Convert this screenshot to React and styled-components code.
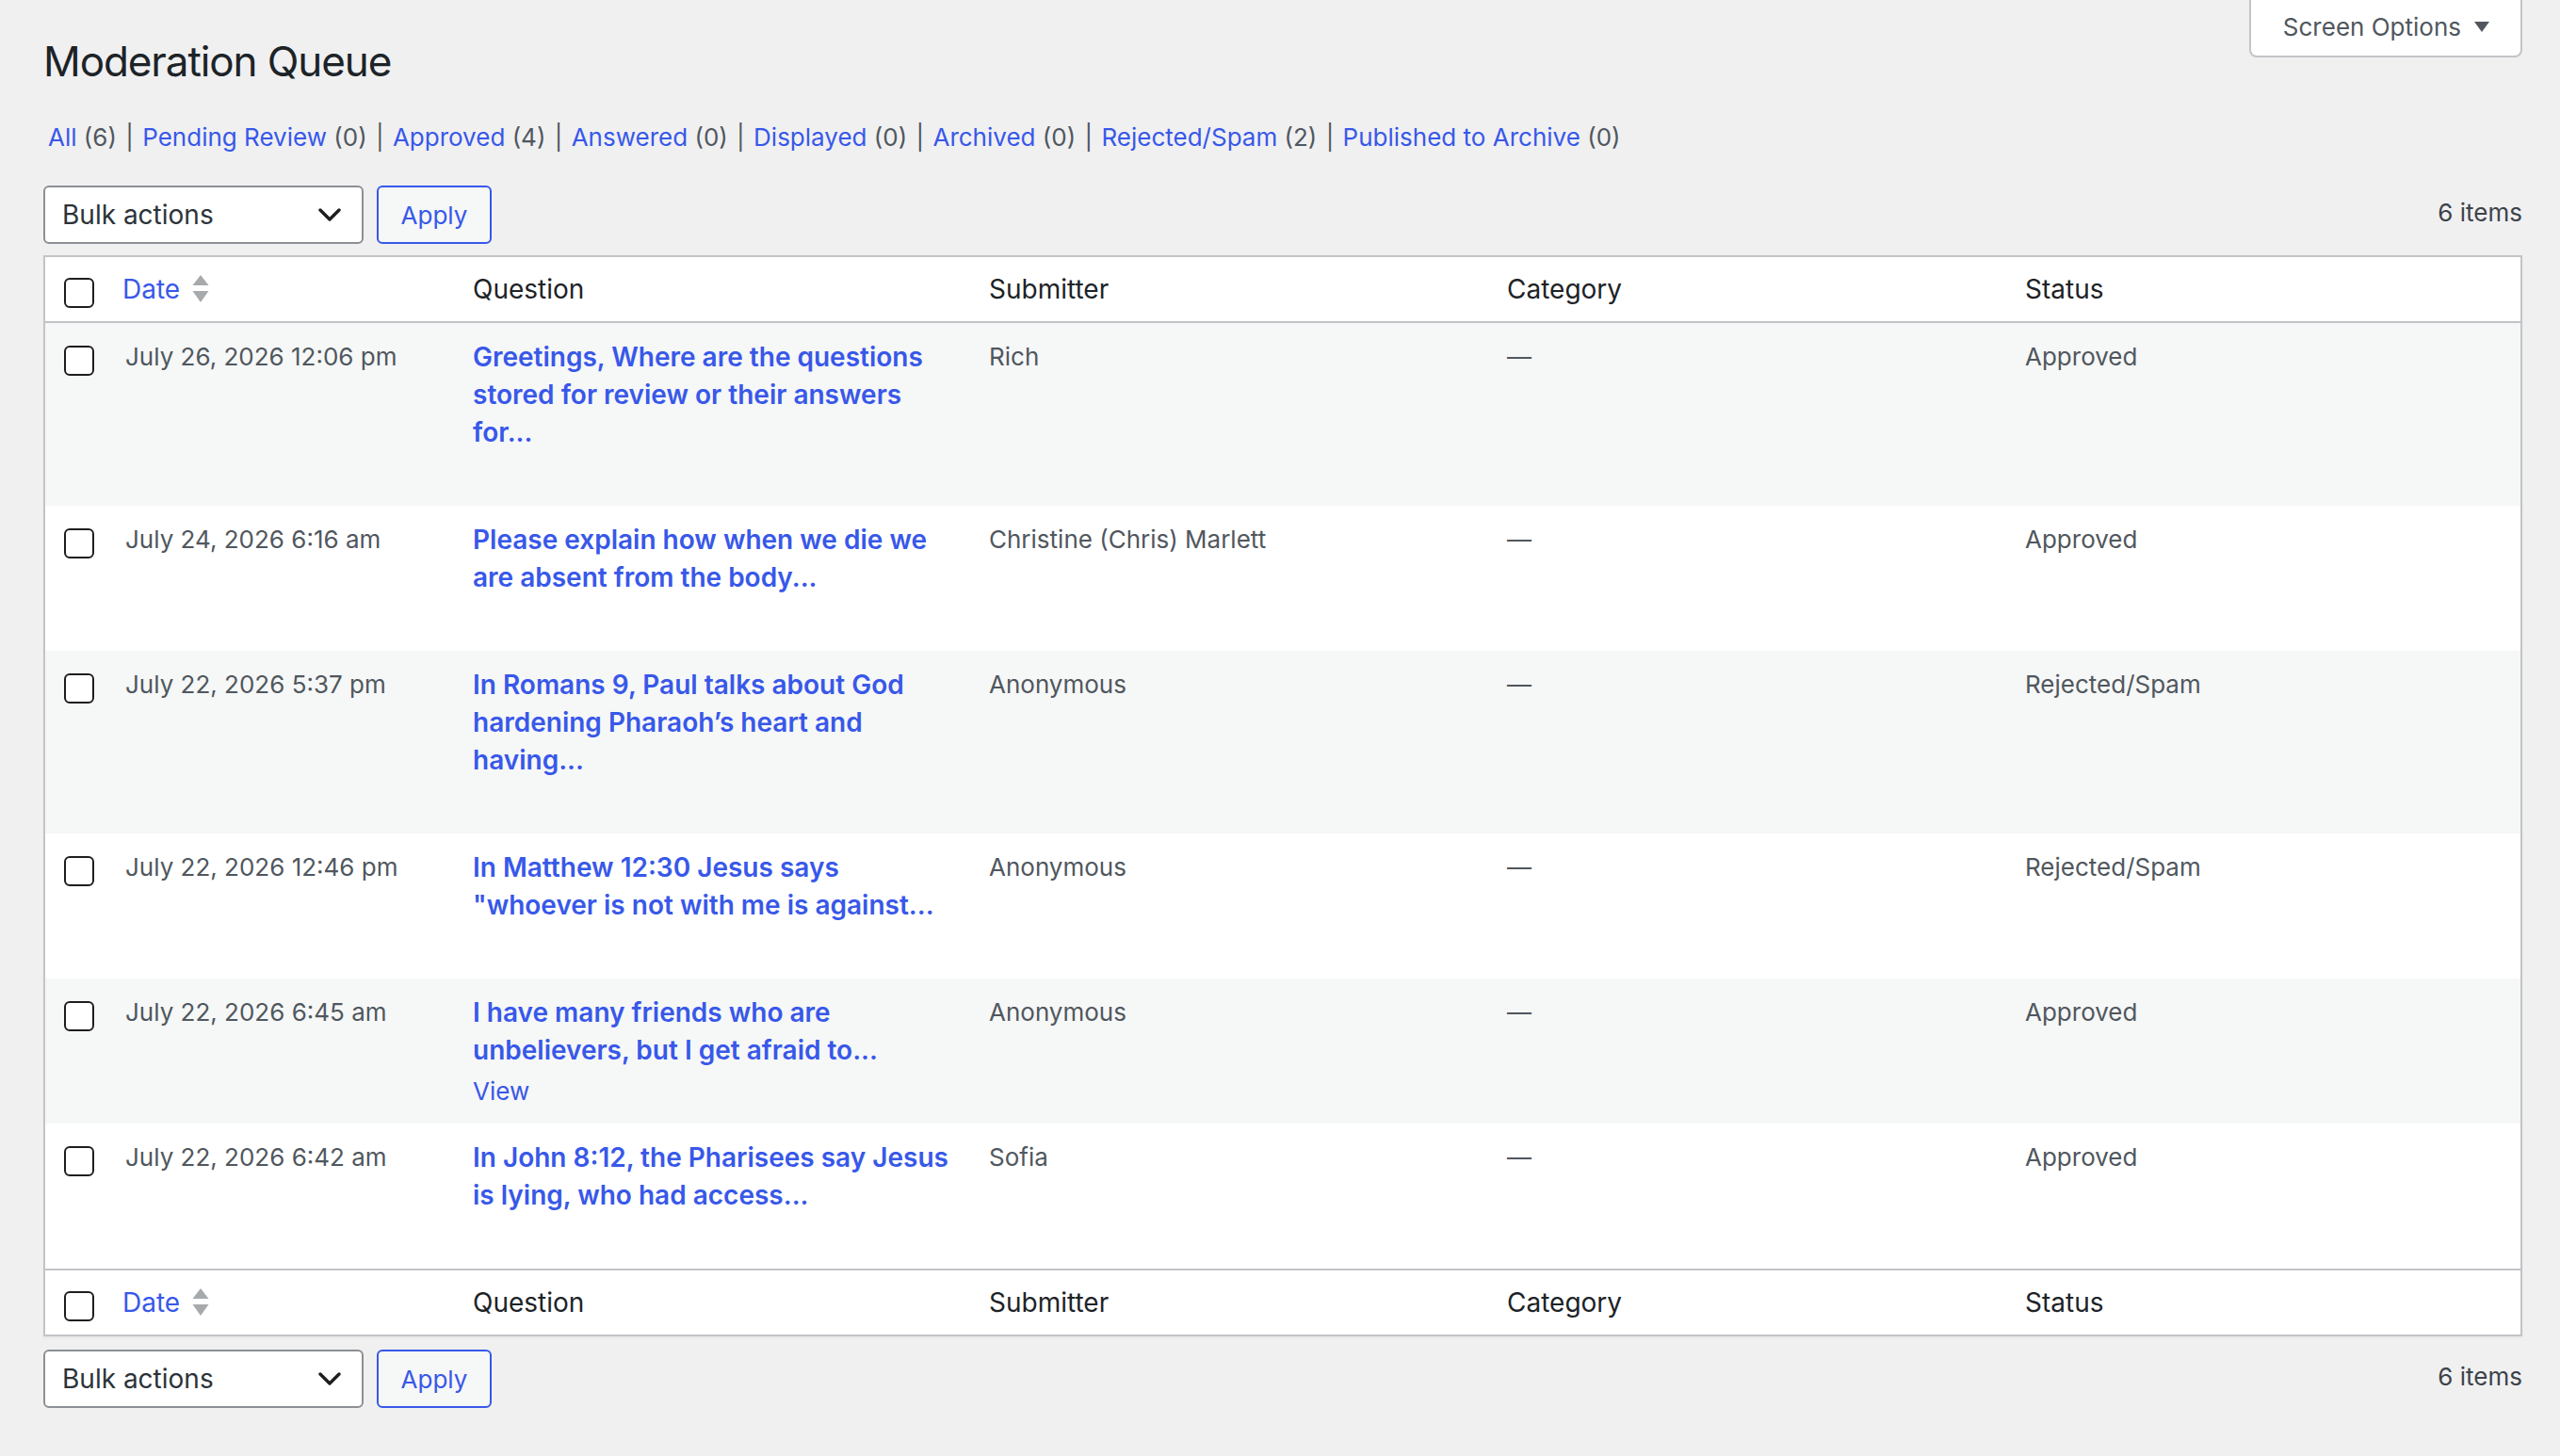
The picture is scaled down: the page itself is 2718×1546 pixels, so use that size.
import React from 'react'
import styled, { createGlobalStyle } from 'styled-components';

const GlobalStyle = createGlobalStyle`
  html, body {
    margin: 0;
    padding: 0;
    background: #f0f0f1;
  }
  body {
    font-family: Inter, "Noto Sans", "Liberation Sans", sans-serif;
    color: #3c434a;
    -webkit-font-smoothing: antialiased;
  }
  * { box-sizing: border-box; }
`

const Page = styled.div`
  padding: 0 40px 40px 46px;
`

const Header = styled.div`
  display: flex;
  justify-content: space-between;
  align-items: flex-start;
`

const Title = styled.h1`
  margin: 35px 0 0 0;
  font-size: 44px;
  line-height: 60px;
  font-weight: 400;
  letter-spacing: -1.1px;
  color: #1d2327;
`

const ScreenTab = styled.button`
  display: flex;
  align-items: center;
  gap: 14px;
  height: 61px;
  margin: 0;
  padding: 0 33px 2px 34px;
  background: #fff;
  border: 2px solid #c3c4c7;
  border-top: none;
  border-radius: 0 0 8px 8px;
  font-family: inherit;
  font-size: 26px;
  color: #50575e;
  cursor: pointer;
`

const Views = styled.ul`
  display: flex;
  flex-wrap: wrap;
  list-style: none;
  margin: 31px 0 0 0;
  padding: 0 0 0 3px;
  font-size: 26px;
  line-height: 40px;
  color: #50575e;
`

const ViewItem = styled.li`
  white-space: pre;
`

const ViewLink = styled.a`
  padding: 0 2px;
  color: #3858e9;
  text-decoration: none;
  cursor: pointer;
`

const Count = styled.span`
  color: #50575e;
`

const TableNav = styled.div`
  display: flex;
  align-items: center;
  justify-content: space-between;
  margin-top: ${p => p.$top}px;
`

const Actions = styled.div`
  display: flex;
  align-items: center;
  gap: 14px;
`

const FakeSelect = styled.div`
  display: flex;
  align-items: center;
  justify-content: space-between;
  width: 340px;
  height: 62px;
  padding: 0 22px 0 18px;
  background: #fff;
  border: 2px solid #8c8f94;
  border-radius: 6px;
  font-size: 28px;
  color: #2c3338;
  cursor: pointer;
`

const ApplyButton = styled.button`
  width: 122px;
  height: 62px;
  margin: 0;
  padding: 0;
  background: #f6f7f7;
  border: 2px solid #3858e9;
  border-radius: 6px;
  font-family: inherit;
  font-size: 26px;
  color: #3858e9;
  cursor: pointer;
`

const ItemCount = styled.span`
  margin-bottom: 4px;
  font-size: 26px;
  line-height: 40px;
  color: #3c434a;
`

const Table = styled.table`
  width: 100%;
  margin-top: 12px;
  border-collapse: separate;
  border-spacing: 0;
  table-layout: fixed;
  background: #fff;
  border: 2px solid #c3c4c7;
  box-shadow: 0 2px 2px rgba(0, 0, 0, 0.04);
`

const Th = styled.th`
  width: ${p => p.$w ? p.$w + 'px' : 'auto'};
  padding: ${p => p.$check ? '14px 0 14px 20px' : '14px 20px'};
  text-align: left;
  vertical-align: top;
  font-size: 28px;
  line-height: 40px;
  font-weight: 400;
  color: #1d2327;
  border-bottom: ${p => p.$foot ? 'none' : '2px solid #c3c4c7'};
  border-top: ${p => p.$foot ? '2px solid #c3c4c7' : 'none'};
`

const Row = styled.tr`
  background: ${p => p.$striped ? '#f6f7f7' : '#fff'};
`

const Td = styled.td`
  padding: ${p => p.$check ? '16px 0 14px 20px' : '16px 20px 14px'};
  vertical-align: top;
  font-size: 26px;
  line-height: 40px;
  color: #50575e;
`

const DateText = styled.span`
  padding-left: 3px;
`

const Check = styled.input`
  appearance: none;
  display: block;
  width: 32px;
  height: 32px;
  margin: 8px 0 0 0;
  background: #fff;
  border: 2px solid #1e1e1e;
  border-radius: 6px;
  cursor: pointer;
`

const SortLink = styled.a`
  display: inline-flex;
  align-items: center;
  gap: 13px;
  color: #3858e9;
  text-decoration: none;
  cursor: pointer;
`

const QuestionLink = styled.a`
  display: block;
  font-size: 28px;
  font-weight: 600;
  line-height: 40px;
  color: #3858e9;
  text-decoration: none;
  cursor: pointer;
`

const RowActions = styled.div`
  padding-top: 4px;
  font-size: 26px;
  line-height: 40px;
  visibility: ${p => p.$show ? 'visible' : 'hidden'};
  a {
    color: #3858e9;
    text-decoration: none;
  }
`

const views = [
  ['All', 6],
  ['Pending Review', 0],
  ['Approved', 4],
  ['Answered', 0],
  ['Displayed', 0],
  ['Archived', 0],
  ['Rejected/Spam', 2],
  ['Published to Archive', 0],
]

const rows = [
  { date: 'July 26, 2026 12:06 pm', q: 'Greetings, Where are the questions stored for review or their answers for...', who: 'Rich', status: 'Approved' },
  { date: 'July 24, 2026 6:16 am', q: 'Please explain how when we die we are absent from the body...', who: 'Christine (Chris) Marlett', status: 'Approved' },
  { date: 'July 22, 2026 5:37 pm', q: 'In Romans 9, Paul talks about God hardening Pharaoh\u2019s heart and having...', who: 'Anonymous', status: 'Rejected/Spam' },
  { date: 'July 22, 2026 12:46 pm', q: 'In Matthew 12:30 Jesus says "whoever is not with me is against...', who: 'Anonymous', status: 'Rejected/Spam' },
  { date: 'July 22, 2026 6:45 am', q: 'I have many friends who are unbelievers, but I get afraid to...', who: 'Anonymous', status: 'Approved', hover: true },
  { date: 'July 22, 2026 6:42 am', q: 'In John 8:12, the Pharisees say Jesus is lying, who had access...', who: 'Sofia', status: 'Approved' },
]

const Chevron = () => (
  <svg width="24" height="14" viewBox="0 0 24 14" fill="none">
    <path d="M2 2 L12 12 L22 2" stroke="#1e1e1e" strokeWidth="3.4" strokeLinecap="round" strokeLinejoin="round" />
  </svg>
)

const SortArrows = () => (
  <svg width="18" height="30" viewBox="0 0 18 30">
    <path d="M9 0 L17.5 11 L0.5 11 Z" fill="#a7aaad" />
    <path d="M0.5 17 L17.5 17 L9 29 Z" fill="#a7aaad" />
  </svg>
)

const Caret = () => (
  <svg width="16" height="11" viewBox="0 0 16 11">
    <path d="M0 0 L16 0 L8 11 Z" fill="#50575e" />
  </svg>
)

const HeadRow = ({ foot }) => (
  <tr>
    <Th $w={62} $check $foot={foot}><Check type="checkbox" /></Th>
    <Th $w={372} $foot={foot}>
      <SortLink>Date <SortArrows /></SortLink>
    </Th>
    <Th $w={548} $foot={foot}>Question</Th>
    <Th $w={550} $foot={foot}>Submitter</Th>
    <Th $w={550} $foot={foot}>Category</Th>
    <Th $foot={foot}>Status</Th>
  </tr>
)

const Nav = ({ top }) => (
  <TableNav $top={top}>
    <Actions>
      <FakeSelect>
        <span>Bulk actions</span>
        <Chevron />
      </FakeSelect>
      <ApplyButton>Apply</ApplyButton>
    </Actions>
    <ItemCount>6 items</ItemCount>
  </TableNav>
)

const App = () => {
  return (
    <Page>
      <GlobalStyle />
      <Header>
        <Title>Moderation Queue</Title>
        <ScreenTab>Screen Options <Caret /></ScreenTab>
      </Header>

      <Views>
        {views.map(([label, n], i) => (
          <ViewItem key={label}>
            <ViewLink>{label} <Count>({n})</Count></ViewLink>
            {i < views.length - 1 ? ' | ' : ''}
          </ViewItem>
        ))}
      </Views>

      <Nav top={31} />

      <Table>
        <thead>
          <HeadRow />
        </thead>
        <tbody>
          {rows.map((r, i) => (
            <Row key={i} $striped={i % 2 === 0}>
              <Td $check><Check type="checkbox" /></Td>
              <Td><DateText>{r.date}</DateText></Td>
              <Td>
                <QuestionLink>{r.q}</QuestionLink>
                <RowActions $show={r.hover}><a>View</a></RowActions>
              </Td>
              <Td>{r.who}</Td>
              <Td>{'\u2014'}</Td>
              <Td>{r.status}</Td>
            </Row>
          ))}
        </tbody>
        <tfoot>
          <HeadRow foot />
        </tfoot>
      </Table>

      <Nav top={14} />
    </Page>
  )
}

export default App;
